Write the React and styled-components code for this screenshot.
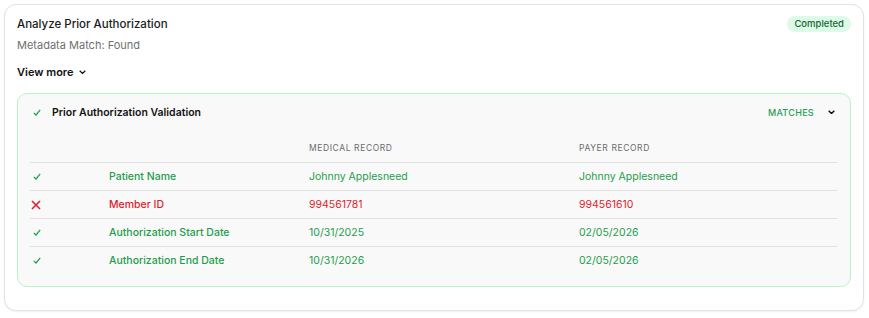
import styled, { createGlobalStyle } from "styled-components";

const GlobalStyle = createGlobalStyle`
  body {
    margin: 0;
    padding: 4px;
    background: #ffffff;
    font-family: Inter, "Liberation Sans", sans-serif;
  }
`;

const rows = [
  { id: 1, field: "Patient Name", medical: "Johnny Applesneed", payer: "Johnny Applesneed", ok: true },
  { id: 2, field: "Member ID", medical: "994561781", payer: "994561610", ok: false },
  { id: 3, field: "Authorization Start Date", medical: "10/31/2025", payer: "02/05/2026", ok: true },
  { id: 4, field: "Authorization End Date", medical: "10/31/2026", payer: "02/05/2026", ok: true },
];

function CheckIcon() {
  return (
    <svg width="8" height="7" viewBox="0 0 8 7" fill="none">
      <path d="M0.8 3.8 L3 6 L7.2 0.8" stroke="#16a34a" strokeWidth="1.2" />
    </svg>
  );
}

function CrossIcon() {
  return (
    <svg width="10" height="10" viewBox="0 0 10 10" fill="none">
      <path d="M1 1 L9 9 M9 1 L1 9" stroke="#e11d2e" strokeWidth="1.6" />
    </svg>
  );
}

function Chevron({ size = 7, weight = 1.2 }) {
  return (
    <svg width={size} height={size * 0.6} viewBox="0 0 10 6" fill="none">
      <path d="M1 1 L5 5 L9 1" stroke="#111" strokeWidth={weight * 1.6} />
    </svg>
  );
}

function App() {
  return (
    <>
      <GlobalStyle />
      <Card>
        <TitleRow>
          <Title>Analyze Prior Authorization</Title>
          <Badge>Completed</Badge>
        </TitleRow>
        <Subtitle>Metadata Match: Found</Subtitle>
        <ViewMore>
          View more <Chevron size={7} weight={1.1} />
        </ViewMore>
        <Panel>
          <PanelHeader>
            <HeaderLeft>
              <CheckIcon />
              <PanelTitle>Prior Authorization Validation</PanelTitle>
            </HeaderLeft>
            <HeaderRight>
              <Status>MATCHES</Status>
              <Chevron size={7} weight={1.3} />
            </HeaderRight>
          </PanelHeader>
          <Table>
            <HeadRow>
              <span />
              <span />
              <HeadCell>MEDICAL RECORD</HeadCell>
              <HeadCell>PAYER RECORD</HeadCell>
            </HeadRow>
            {rows.map((row) => (
              <Row key={row.id}>
                <IconCell $ok={row.ok}>{row.ok ? <CheckIcon /> : <CrossIcon />}</IconCell>
                <FieldCell $ok={row.ok}>{row.field}</FieldCell>
                <ValueCell $ok={row.ok}>{row.medical}</ValueCell>
                <ValueCell $ok={row.ok}>{row.payer}</ValueCell>
              </Row>
            ))}
          </Table>
        </Panel>
      </Card>
    </>
  );
}

const Card = styled.div`
  width: 860px;
  height: 307px;
  box-sizing: border-box;
  border: 1px solid #e2e2e2;
  border-radius: 12px;
  box-shadow: 0 1px 2px rgba(0, 0, 0, 0.06);
  padding: 11px 12px 0 12px;
  background: #fff;
`;

const TitleRow = styled.div`
  display: flex;
  align-items: center;
  justify-content: space-between;
  height: 16px;
`;

const Title = styled.div`
  font-size: 11.5px;
  font-weight: 500;
  color: #1a1a1a;
`;

const Badge = styled.div`
  height: 16px;
  padding: 0 7px;
  border-radius: 8px;
  background: #dcfce7;
  color: #166534;
  font-size: 9.5px;
  font-weight: 500;
  line-height: 16px;
`;

const Subtitle = styled.div`
  margin-top: 6px;
  font-size: 11px;
  line-height: 14px;
  color: #707070;
`;

const ViewMore = styled.div`
  margin-top: 12px;
  height: 16px;
  display: flex;
  align-items: center;
  gap: 6px;
  font-size: 11px;
  font-weight: 600;
  color: #111;
`;

const Panel = styled.div`
  margin-top: 13px;
  height: 194px;
  box-sizing: border-box;
  border: 1px solid #b7f2c9;
  border-radius: 10px;
  background: #f9f9f9;
  padding: 11px 13px 0 12px;
`;

const PanelHeader = styled.div`
  display: flex;
  align-items: center;
  justify-content: space-between;
  height: 14px;
`;

const HeaderLeft = styled.div`
  display: flex;
  align-items: center;
  gap: 11px;
  padding-left: 3px;
`;

const PanelTitle = styled.div`
  font-size: 10.5px;
  font-weight: 600;
  color: #111;
`;

const HeaderRight = styled.div`
  display: flex;
  align-items: center;
  gap: 14px;
  padding-right: 2px;
`;

const Status = styled.div`
  font-size: 9px;
  font-weight: 500;
  letter-spacing: 0.3px;
  color: #22a352;
`;

const Table = styled.div`
  margin-top: 14px;
  display: flex;
  flex-direction: column;
`;

const HeadRow = styled.div`
  display: grid;
  grid-template-columns: 79px 200px 270px 1fr;
  align-items: center;
  height: 29px;
  border-bottom: 1px solid #e0e0e0;
`;

const HeadCell = styled.div`
  font-size: 8.5px;
  letter-spacing: 0.6px;
  color: #6b6b6b;
`;

const Row = styled.div`
  display: grid;
  grid-template-columns: 79px 200px 270px 1fr;
  align-items: center;
  height: 27px;
  border-bottom: 1px solid #e0e0e0;

  &:last-child {
    border-bottom: none;
  }
`;

const IconCell = styled.div`
  display: flex;
  align-items: center;
  padding-left: ${({ $ok }) => ($ok ? "3px" : "1px")};
`;

const FieldCell = styled.div`
  font-size: 10.5px;
  font-weight: 500;
  color: ${({ $ok }) => ($ok ? "#1f9d4c" : "#e11d2e")};
`;

const ValueCell = styled.div`
  font-size: 10.5px;
  color: ${({ $ok }) => ($ok ? "#1f9d4c" : "#e11d2e")};
`;

export default App;
